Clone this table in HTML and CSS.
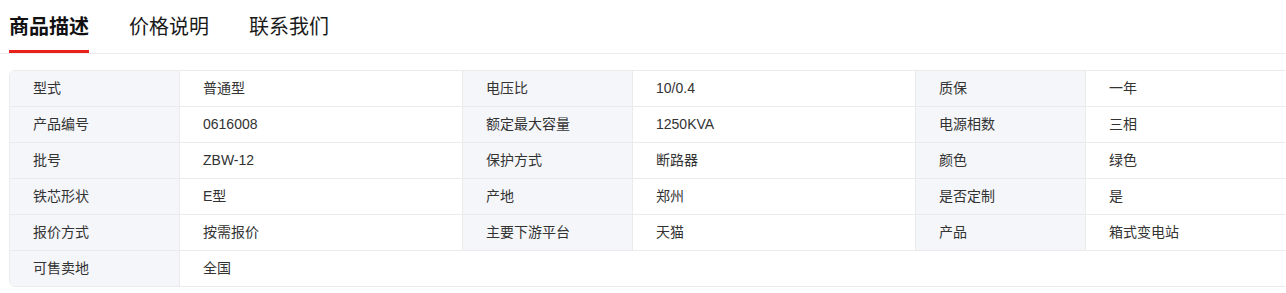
FILE: index.html
```html
<!DOCTYPE html>
<html lang="zh-CN">
<head>
<meta charset="utf-8">
<title>商品描述</title>
<link rel="stylesheet" href="styles.css">
</head>
<body>
<div class="page">
  <div class="tabs">
    <div class="tab active">商品描述</div>
    <div class="tab">价格说明</div>
    <div class="tab">联系我们</div>
  </div>
  <div class="specs">
    <div class="k">型式</div><div class="v">普通型</div>
    <div class="k">电压比</div><div class="v">10/0.4</div>
    <div class="k">质保</div><div class="v">一年</div>

    <div class="k">产品编号</div><div class="v">0616008</div>
    <div class="k">额定最大容量</div><div class="v">1250KVA</div>
    <div class="k">电源相数</div><div class="v">三相</div>

    <div class="k">批号</div><div class="v">ZBW-12</div>
    <div class="k">保护方式</div><div class="v">断路器</div>
    <div class="k">颜色</div><div class="v">绿色</div>

    <div class="k">铁芯形状</div><div class="v">E型</div>
    <div class="k">产地</div><div class="v">郑州</div>
    <div class="k">是否定制</div><div class="v">是</div>

    <div class="k">报价方式</div><div class="v">按需报价</div>
    <div class="k">主要下游平台</div><div class="v">天猫</div>
    <div class="k">产品</div><div class="v">箱式变电站</div>

    <div class="k last">可售卖地</div><div class="v last wide">全国</div>
  </div>
</div>
</body>
</html>
```
FILE: styles.css
```css
html, body {
  margin: 0;
  padding: 0;
  background: #fff;
  overflow: hidden;
}
body {
  font-family: "Liberation Sans", "Noto Sans CJK SC", sans-serif;
  color: #333;
}
.page {
  width: 1286px;
}
.tabs {
  display: flex;
  gap: 40px;
  padding-left: 9px;
  border-bottom: 1px solid #ececec;
}
.tab {
  font-size: 20px;
  line-height: 28px;
  padding-top: 13px;
  padding-bottom: 9px;
  border-bottom: 3px solid transparent;
  color: #1a1a1a;
  width: 80px;
  white-space: nowrap;
}
.tab.active {
  font-weight: 700;
  color: #111;
  border-bottom-color: #e8211a;
}
.specs {
  margin: 16px 0 0 9px;
  width: 1360px;
  display: grid;
  grid-template-columns: repeat(3, 170px 283px);
  border: 1px solid #ebebeb;
  border-radius: 6px;
  overflow: hidden;
  box-sizing: border-box;
}
.k, .v {
  height: 36px;
  box-sizing: border-box;
  border-bottom: 1px solid #ebebeb;
  border-right: 1px solid #ebebeb;
  font-size: 14px;
  line-height: 35px;
  white-space: nowrap;
}
.k {
  background: #f5f6fa;
  padding-left: 23px;
}
.v {
  background: #fff;
  padding-left: 23px;
}
.last {
  height: 35px;
  border-bottom: none;
}
.wide {
  grid-column: span 5;
  border-right: none;
}
```
